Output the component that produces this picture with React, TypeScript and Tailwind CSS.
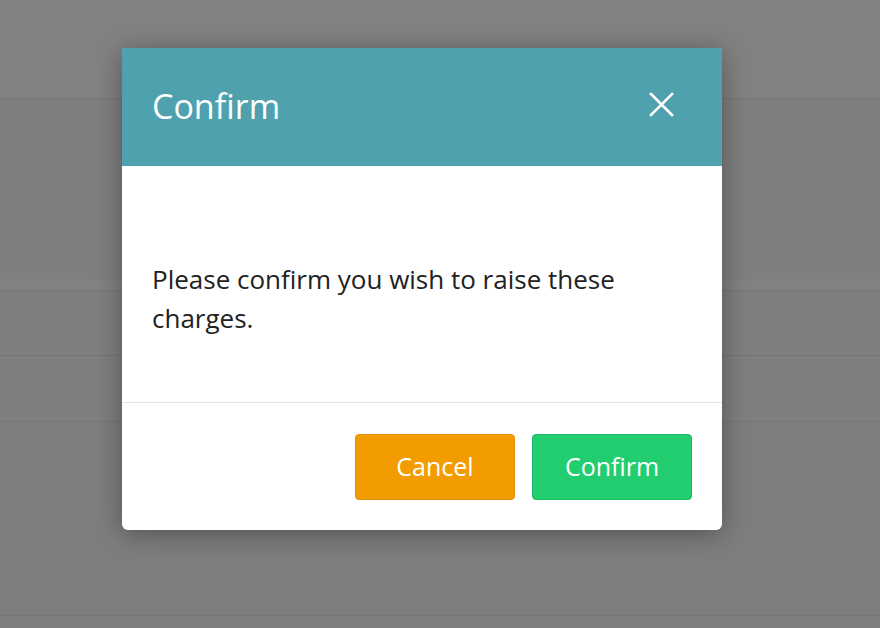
import React from "react";

export default function App() {
  return (
    <div className="relative w-[880px] h-[628px] overflow-hidden bg-[#7f7f7f]" style={{ fontFamily: '"Open Sans", sans-serif' }}>
      <div className="flex flex-col">
        <div className="h-[99px] bg-[#828282] border-b border-[#777777]" />
        <div className="h-[180px] bg-[#7f7f7f]" />
        <div className="h-[12px] bg-[#828282] border-b border-[#787878]" />
        <div className="h-[65px] bg-[#7f7f7f] border-b border-[#6f7583]" />
        <div className="h-[66px] bg-[#7f7f7f] border-b border-[#777777]" />
        <div className="h-[194px] bg-[#7e7e7e] border-b border-[#767676]" />
        <div className="h-[8px] bg-[#7f7f7f]" />
      </div>
      <div className="absolute left-[122px] top-[48px] w-[600px] rounded-b-[6px] bg-white shadow-[0_4px_28px_rgba(0,0,0,0.35)]">
        <div className="flex h-[118px] items-center justify-between bg-[#4fa2ad] pl-[30px] pr-[48px]">
          <span className="text-[34px] leading-none text-white pb-[2px]">Confirm</span>
          <svg width="25" height="25" viewBox="0 0 25 25" className="mt-[-5px]">
            <path d="M2 2 L23 23 M23 2 L2 23" stroke="white" strokeWidth="2.6" strokeLinecap="square" />
          </svg>
        </div>
        <div className="flex h-[236px] items-center px-[30px] pt-[30px]">
          <p className="text-[26px] leading-[39px] text-[#222222]">Please confirm you wish to raise these charges.</p>
        </div>
        <div className="border-t border-[#e3e3e3] flex justify-end gap-[17px] pr-[30px] pt-[31px] pb-[30px]">
          <button className="h-[66px] w-[160px] rounded-[4px] border border-[#e08e0b] bg-[#f39c00] text-[25px] text-white">Cancel</button>
          <button className="h-[66px] w-[160px] rounded-[4px] border border-[#1cb95f] bg-[#21cd6f] text-[25px] text-white">Confirm</button>
        </div>
      </div>
    </div>
  );
}
